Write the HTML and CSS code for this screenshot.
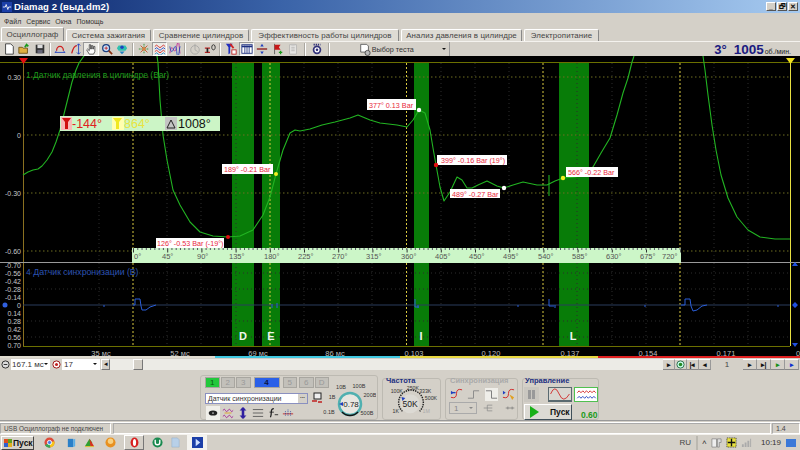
FILE: index.html
```html
<!DOCTYPE html>
<html lang="ru">
<head>
<meta charset="utf-8">
<title>Diamag 2</title>
<link rel="stylesheet" href="styles.css">
</head>
<body>
<div class="app">
  <header class="titlebar">
    <svg class="appicon" viewBox="0 0 12 12"><rect width="12" height="12" fill="#1c3fa8"/><path d="M1 6h3l1-3 2 6 1-3h3" stroke="#fff" fill="none"/></svg>
    <span class="title">Diamag 2 (выд.dm2)</span>
    <span class="winbtns">
      <span class="winbtn">_</span><span class="winbtn">🗗</span><span class="winbtn">✕</span>
    </span>
  </header>
  <nav class="menu"><span>Файл</span><span>Сервис</span><span>Окна</span><span>Помощь</span></nav>
  <div class="tabs">
    <span class="tab active t1">Осциллограф</span>
    <span class="tab t2">Система зажигания</span>
    <span class="tab t3">Сравнение цилиндров</span>
    <span class="tab t4">Эффективность работы цилиндров</span>
    <span class="tab t5">Анализ давления в цилиндре</span>
    <span class="tab t6">Электропитание</span>
  </div>
  <div class="toolbar">
    <span class="tb"><svg viewBox="0 0 14 14"><path d="M3 1h6l3 3v9H3z" fill="#fff" stroke="#333"/></svg></span>
    <span class="tb"><svg viewBox="0 0 14 14"><path d="M1 12V5h4l1 1h5v6z" fill="#e0b040" stroke="#6a5010"/><path d="M8 5l2-3 2 2" stroke="#1a9a1a" stroke-width="2" fill="none"/></svg></span>
    <span class="tb"><svg viewBox="0 0 14 14"><rect x="2" y="2" width="10" height="10" fill="#333"/><rect x="4" y="2" width="6" height="4" fill="#ddd"/><rect x="4" y="8" width="6" height="4" fill="#667"/></svg></span>
    <span class="sep s1"></span>
    <span class="tb"><svg viewBox="0 0 14 14"><path d="M3 9a4 5 0 0 1 8 0" stroke="#d02020" stroke-width="1.500" fill="none"/><path d="M1 11h12M1 11l2-1.500M13 11l-2-1.500" stroke="#2040c0" fill="none"/></svg></span>
    <span class="tb"><svg viewBox="0 0 14 14"><path d="M2 12C4 4 6 3 8 3" stroke="#d02020" fill="none" stroke-width="1.500"/><path d="M10 1v12M8 3l2-2 2 2M8 11l2 2 2-2" stroke="#2040c0" fill="none"/></svg></span>
    <span class="tb on"><svg viewBox="0 0 14 14"><path d="M5 13L2 8l1-1 2 2V2h1.500v5h1V3H9v4h1V4h1.500v6L10 13z" fill="#fff" stroke="#222" stroke-width=".8"/></svg></span>
    <span class="tb"><svg viewBox="0 0 14 14"><circle cx="6" cy="6" r="4" fill="#cfe6ff" stroke="#1c3f80" stroke-width="1.500"/><path d="M9 9l4 4" stroke="#8a3010" stroke-width="2"/><path d="M4 6h4M6 4v4" stroke="#c02020"/></svg></span>
    <span class="tb"><svg viewBox="0 0 14 14"><path d="M3 3h8l2 3-2 3H3L1 6z" fill="#30c0b0"/><path d="M4 10h6l-3 3z" fill="#2080c0"/><circle cx="7" cy="5" r="2" fill="#2040c0"/></svg></span>
    <span class="sep s2"></span>
    <span class="tb"><svg viewBox="0 0 14 14"><path d="M7 1v12M1 7h12" stroke="#2a8a2a" stroke-dasharray="2 1"/><path d="M3 3l8 8M11 3l-8 8" stroke="#c05020"/><circle cx="7" cy="7" r="2" fill="#e08040"/></svg></span>
    <span class="tb on"><svg viewBox="0 0 14 14"><path d="M1 4q2-3 4 0t4 0 4 0" stroke="#d02020" fill="none"/><path d="M1 7q2-3 4 0t4 0 4 0" stroke="#2040c0" fill="none"/><path d="M1 10q2-3 4 0t4 0 4 0" stroke="#d02020" fill="none"/><path d="M1 13q2-3 4 0t4 0 4 0" stroke="#2080c0" fill="none"/></svg></span>
    <span class="tb"><svg viewBox="0 0 14 14"><path d="M1 12C4-6 6 20 9 4s3 8 4 8" stroke="#c02090" fill="none"/><path d="M1 4c3 18 6-12 8 6s3-6 4-6" stroke="#2040c0" fill="none"/></svg></span>
    <span class="sep s3"></span>
    <span class="tb dim"><svg viewBox="0 0 14 14"><circle cx="7" cy="8" r="5" fill="none" stroke="#999"/><path d="M7 1v7l3 2" stroke="#999" fill="none"/></svg></span>
    <span class="tb"><svg viewBox="0 0 14 14"><path d="M1 6h6M1 11h6" stroke="#c02020" stroke-width="1.500"/><path d="M4 6v5" stroke="#222" stroke-width="2"/><path d="M11 2a2 3 0 1 0 .1 0" stroke="#222" fill="none"/></svg></span>
    <span class="sep s4"></span>
    <span class="tb"><svg viewBox="0 0 14 14"><path d="M1 1h8L6 5v7L4 13V5z" fill="#2030c0"/><path d="M6 1l4 5" stroke="#d02020" stroke-width="2"/><rect x="8" y="8" width="5" height="5" fill="#fff" stroke="#c02020"/></svg></span>
    <span class="tb on"><svg viewBox="0 0 14 14"><rect x="1" y="2" width="12" height="10" fill="#fff" stroke="#1c2f80"/><path d="M1 4h12" stroke="#1c2f80" stroke-width="2"/><path d="M4.500 3v9M7 3v9M9.500 3v9" stroke="#1c2f80"/></svg></span>
    <span class="tb"><svg viewBox="0 0 14 14"><path d="M1 7h12" stroke="#8a1010" stroke-width="1.500"/><path d="M7 1l2 3H5zM7 13l2-3H5z" fill="#2040c0"/></svg></span>
    <span class="tb"><svg viewBox="0 0 14 14"><path d="M3 1v12" stroke="#555"/><path d="M3 2h7l-2 3 2 3H3z" fill="#c81818"/><path d="M10 9v4M8 11h4" stroke="#1a9a1a" stroke-width="1.500"/></svg></span>
    <span class="tb dim"><svg viewBox="0 0 14 14"><path d="M3 2h8v11H3z" fill="#eee" stroke="#aaa"/><path d="M5 5h4M5 7h4M5 9h4" stroke="#aaa"/><rect x="5" y="1" width="4" height="2" fill="#bbb"/></svg></span>
    <span class="sep s5"></span>
    <span class="tb"><svg viewBox="0 0 14 14"><circle cx="7" cy="8" r="4" fill="#fff" stroke="#33337a" stroke-width="2"/><circle cx="7" cy="8" r="1.500" fill="#33337a"/><path d="M3 2h8" stroke="#33337a" stroke-width="2" stroke-dasharray="1.500 1"/></svg></span>
    <span class="sep s6"></span>
    <span class="testsel">
      <svg viewBox="0 0 14 14"><path d="M2 1h7l2 2v7H2z" fill="#fff" stroke="#555"/><circle cx="10" cy="11" r="3" fill="#bbb" stroke="#444"/></svg>
      <span class="testtxt">Выбор теста</span>
      <span class="arrow"></span>
    </span>
    <span class="rpm"><b class="deg">3°</b><b class="val">1005</b><span class="unit">об./мин.</span></span>
  </div>

  <svg class="plot" viewBox="0 56 800 302">
    <rect x="0" y="56" width="800" height="302" fill="#000"/>
    <g fill="#087c08">
      <rect x="232" y="63" width="22" height="283"/>
      <rect x="262" y="63" width="18" height="283"/>
      <rect x="414" y="63" width="15" height="283"/>
      <rect x="559" y="63" width="30" height="283"/>
    </g>
    <g class="griddim">
      <path d="M99 63V346M167 63V346M201 63V346M236 63V346M304 63V346M338 63V346M372 63V346M441 63V346M475 63V346M509 63V346M577 63V346M612 63V346M646 63V346M714 63V346M748 63V346"/>
      <path d="M23 273H790M23 289H790M23 321H790M23 337H790"/>
    </g>
    <g class="gridh">
      <path d="M23 77H790M23 135H790M23 193H790M23 251H790"/>
    </g>
    <g class="gridv">
      <path d="M133 63V346M270 63V346M406.500 63V346M543 63V346M680 63V346"/>
    </g>
    <path class="olive" d="M0 62.500H800M23 346.500H790"/>
    <path class="axisl" d="M23.500 58V346"/>
    <path class="axisr" d="M790.500 60V346"/>
    <path class="gray" d="M0 262.500H132M680 262.500H800"/>
    <path fill="#e01010" d="M19 58h9l-4.500 6z"/>
    <path fill="#f0e020" d="M786 58h9l-4.500 6z"/>

    <polyline class="trace" points="23,175 28,172 33,170 38,169 42,166 47,160 52,152 56,142 60,130 64,114 68,98 72,82 76,70 79,63 84,56"/>
    <polyline class="trace" points="157,56 158,63 160,100 163,135 167,160 173,190 180,205 190,222 200,232 213,236 228,237 240,236 253,230 263,215 270,197 276,174 283,150 290,133 295,130 300,131 310,129 322,125 335,122 350,118 358,115 370,120 380,123 397,125 407,127 413,120 419,110 425,113 430,130 433,148 436,165 440,187 444,201 450,192 457,177 462,180 467,188 472,188 478,185 487,181 497,186 504,188 513,185 523,182 537,185 547,185 555,181 563,178 575,177 583,175 593,167 601,153 610,138 617,115 623,93 628,78 632,62 634,56"/>
    <polyline class="trace" points="703,56 705,70 708,95 712,125 716,150 721,175 728,198 737,217 748,230 760,237 775,239 790,239"/>
    <path class="trace" d="M549 175V196"/>

    <path class="base" d="M23 305H790"/>
    <polyline class="sig" points="133,305 135,305 135,299 140,299 141,306 142,310 146,310 150,307 156,305"/>
    <polyline class="sig" points="681,305 685,305 685,299 690,299 691,306 693,311 697,310 702,306 707,305"/>
    <path class="sig" d="M104 305v2M415 299v8h4M418 305v3M518 305v2M549 299v7h5M555 305v3M645 305v2M778 305v2M272 304v4M277 303v5"/>

    <rect class="ruler" x="132" y="248" width="549" height="15"/>
    <path class="rtick" d="M133 249H681"/>
    <path class="rtickb" d="M133 251H681"/>
    <g class="rtext">
      <text x="134" y="259">0°</text><text x="162" y="259">45°</text><text x="197" y="259">90°</text><text x="229" y="259">135°</text><text x="264" y="259">180°</text><text x="298" y="259">225°</text><text x="332" y="259">270°</text><text x="366" y="259">315°</text><text x="401" y="259">360°</text><text x="435" y="259">405°</text><text x="469" y="259">450°</text><text x="503" y="259">495°</text><text x="538" y="259">540°</text><text x="572" y="259">585°</text><text x="606" y="259">630°</text><text x="640" y="259">675°</text><text x="662" y="259">720°</text>
    </g>

    <g class="yscale">
      <text x="21" y="80">0.30</text><text x="21" y="138">0</text><text x="21" y="196">-0.30</text><text x="21" y="254">-0.60</text>
      <text x="21" y="268">-0.70</text><text x="21" y="276">-0.56</text><text x="21" y="284">-0.42</text><text x="21" y="292">-0.28</text><text x="21" y="300">-0.14</text><text x="21" y="308">0</text><text x="21" y="316">0.14</text><text x="21" y="324">0.28</text><text x="21" y="332">0.42</text><text x="21" y="339.500">0.56</text><text x="21" y="347.500">0.70</text>
    </g>
    <g class="xscale">
      <text x="101" y="356">35 мс</text><text x="180" y="356">52 мс</text><text x="258" y="356">69 мс</text><text x="335" y="356">86 мс</text><text x="414" y="356">0.103</text><text x="491" y="356">0.120</text><text x="570" y="356">0.137</text><text x="648" y="356">0.154</text><text x="726" y="356">0.171</text><text x="798" y="356">0</text>
    </g>
    <text class="ch1" x="26" y="78">1 Датчик давления в цилиндре (Bar)</text>
    <text class="ch4" x="26" y="275">4 Датчик синхронизации (В)</text>
    <g class="marks">
      <text x="243" y="340">D</text><text x="271" y="340">E</text><text x="421" y="340">I</text><text x="573" y="340">L</text>
    </g>

    <g class="lblbox">
      <rect x="156" y="238" width="68" height="10"/>
      <rect x="222" y="164" width="51" height="10"/>
      <rect x="367" y="99" width="49" height="11"/>
      <rect x="437" y="155" width="70" height="10"/>
      <rect x="450" y="189" width="50" height="9"/>
      <rect x="566" y="167" width="52" height="10"/>
    </g>
    <g class="lbl">
      <text x="157" y="246">126° -0.53 Bar (-19°)</text>
      <text x="224" y="172">189° -0.21 Bar</text>
      <text x="369" y="108">377° 0.13 Bar</text>
      <text x="441" y="163">399° -0.16 Bar (19°)</text>
      <text x="452" y="197">489° -0.27 Bar</text>
      <text x="568" y="175">566° -0.22 Bar</text>
    </g>
    <circle cx="228" cy="237" r="2" fill="#e01010"/>
    <circle cx="276" cy="174" r="2" fill="#f0f020"/>
    <circle cx="419" cy="110" r="2.200" fill="#fff"/>
    <circle cx="436" cy="165" r="2.200" fill="#e01010"/>
    <circle cx="504" cy="188" r="2.200" fill="#fff"/>
    <circle cx="563" cy="178" r="2.200" fill="#f0f020"/>

    <rect x="60" y="116" width="160" height="15" fill="#ccf5c6"/>
    <rect x="61" y="117" width="11" height="13" fill="#f8b8b8"/>
    <rect x="112" y="117" width="12" height="13" fill="#ffffb0"/>
    <rect x="165" y="117" width="12" height="13" fill="#c4c4c4"/>
    <path fill="#d01010" d="M62 118h9l-3 4v7h-3v-7z"/>
    <path fill="#f0e820" d="M113 118h9l-3 4v7h-3v-7z"/>
    <path d="M171 120l4 8h-8z" fill="none" stroke="#222"/>
    <text class="cur red" x="72" y="128">-144°</text>
    <text class="cur yel" x="124" y="128">864°</text>
    <text class="cur blk" x="178" y="128">1008°</text>

    <circle cx="5" cy="305" r="2.500" fill="#3060e0"/>
    <path fill="#2050e0" d="M795 262l3 4h-6zM795 347l3-4h-6zM795 302l3 3-3 3-3-3z"/>
    <rect x="0" y="356" width="215" height="2" fill="#e0dcd0"/>
    <rect x="215" y="356" width="185" height="2" fill="#40c8e0"/>
    <rect x="400" y="356" width="198" height="2" fill="#e8d840"/>
    <rect x="598" y="356" width="202" height="2" fill="#e02020"/>
  </svg>

  <div class="scrollrow">
    <span class="rb"><svg viewBox="0 0 10 10"><circle cx="5" cy="5" r="4" fill="#ddd" stroke="#222"/><path d="M3 5h4" stroke="#222"/></svg></span>
    <span class="combo c1"><span class="ctext">167.1 мс</span><span class="arrow"></span></span>
    <span class="rb"><svg viewBox="0 0 10 10"><circle cx="5" cy="5" r="4" fill="#fff" stroke="#900"/><circle cx="5" cy="5" r="1.700" fill="#c02020"/></svg></span>
    <span class="combo c2"><span class="ctext">17</span><span class="arrow"></span></span>
    <span class="scrollbar">
      <span class="sbtn">◂</span>
      <span class="thumb"></span>
    </span>
    <span class="ctrl">
      <span class="pb">▸</span><span class="pb rec"><svg viewBox="0 0 10 10"><circle cx="5" cy="5" r="4" fill="#cfe" stroke="#264"/><circle cx="5" cy="5" r="2" fill="#282"/></svg></span><span class="pb">|◂</span><span class="pb">◂</span>
      <span class="pageno">1</span>
      <span class="pb wide">▸</span><span class="pb wide">▸|</span><span class="pb wide grn">▸</span><span class="pb wide blu">▸</span>
    </span>
  </div>

  <section class="panel">
    <div class="group g1">
      <div class="g1left">
        <div class="chans">
          <span class="ch c-on">1</span><span class="ch">2</span><span class="ch">3</span><span class="ch c-blue">4</span><span class="ch c5">5</span><span class="ch">6</span><span class="ch">D</span>
        </div>
        <div class="sensor">
          <span class="sensbox"><span class="senstxt">Датчик синхронизации</span><span class="dots">...</span></span>
          <svg class="swapico" viewBox="0 0 12 12"><rect x="3" y="1" width="7" height="6" fill="#eee" stroke="#222"/><path d="M1 9h5M7 10h4" stroke="#c02020" stroke-width="1.500"/></svg>
        </div>
        <div class="icons6">
          <span class="i6 on"><svg viewBox="0 0 14 14"><ellipse cx="7" cy="7" rx="5" ry="3" fill="#222"/><circle cx="7" cy="7" r="1" fill="#ccc"/></svg></span>
          <span class="i6"><svg viewBox="0 0 14 14"><path d="M1 4q2-3 3 0t3 0 3 0 3 0" stroke="#a02090" fill="none"/><path d="M1 11q2-3 3 0t3 0 3 0 3 0" stroke="#a02090" fill="none"/><path d="M3 7h8" stroke="#e0a020"/></svg></span>
          <span class="i6"><svg viewBox="0 0 14 14"><path d="M7 1v12" stroke="#3020a0" stroke-width="3"/><path d="M7 0l4 4H3zM7 14l4-4H3z" fill="#3020a0"/></svg></span>
          <span class="i6"><svg viewBox="0 0 14 14"><path d="M1 3h12M1 7h12M1 11h12" stroke="#555"/></svg></span>
          <span class="i6"><svg viewBox="0 0 14 14"><path d="M8 2Q5 2 5 6t-1 6" stroke="#222" stroke-width="1.500" fill="none"/><path d="M3 6h5M9 9h4" stroke="#222"/></svg></span>
          <span class="i6"><svg viewBox="0 0 14 14"><path d="M1 8h12" stroke="#c02020"/><path d="M4 5v6M7 3v8M10 5v6" stroke="#2040a0" stroke-dasharray="1 1"/></svg></span>
        </div>
      </div>
      <svg class="knob k1" viewBox="0 0 56 38">
        <g class="klbl">
          <text x="21" y="8">10В</text><text x="39" y="7">100В</text><text x="50" y="16">200В</text><text x="12" y="18">1В</text><text x="9" y="33">0.1В</text><text x="47" y="34">500В</text>
        </g>
        <circle cx="30" cy="23" r="11" fill="#e8e6e0" stroke="#50b0b0" stroke-width="2.500"/>
        <path d="M38 31a11 11 0 0 1-16 0" stroke="#111" stroke-width="1.500" fill="none"/>
        <path d="M19 23l4-2v4z" fill="#2040c0"/>
        <text class="kval" x="31" y="26">0.78</text>
      </svg>
    </div>
    <div class="group g2">
      <div class="gtitle">Частота</div>
      <svg class="knob k2" viewBox="0 0 58 40">
        <g class="klbl">
          <text x="14" y="14">100K</text><text x="31" y="10.500">250K</text><text x="44" y="14">333K</text><text x="50" y="21">500K</text><text x="13" y="35">1K</text><text class="off" x="45" y="35">1M</text>
        </g>
        <path d="M20 33a13 13 0 1 1 18 0" stroke="#222" stroke-width="1.500" fill="#d4d0c8" stroke-dasharray="1.500 1"/>
        <circle cx="28" cy="25" r="10" fill="#dcdad4"/>
        <path d="M19 18l4 1-3 3z" fill="#2040c0"/>
        <text class="kval big" x="28" y="28">50K</text>
      </svg>
    </div>
    <div class="group g3">
      <div class="gtitle off">Синхронизация</div>
      <div class="syncrow">
        <svg viewBox="0 0 14 14"><path d="M1 10Q7 12 7 6t6-4" stroke="#d02020" fill="none"/><path d="M1 5h5" stroke="#2040c0" stroke-width="1.500"/><path d="M1 3l3 2-3 2z" fill="#2040c0"/></svg>
        <svg viewBox="0 0 14 14"><path d="M1 11h6V3h6" stroke="#888" fill="none"/></svg>
        <svg class="pressed" viewBox="0 0 14 14"><path d="M1 3h6v8h6" stroke="#777" fill="none"/></svg>
        <svg viewBox="0 0 14 14"><path d="M1 10Q7 12 7 6t6-4" stroke="#d02020" fill="none"/><path d="M1 3l3 2-3 2z" fill="#2040c0"/><path d="M8 7l5 3-2 3z" fill="#e0a020"/></svg>
      </div>
      <div class="syncrow2">
        <span class="combo c3"><span class="ctext off">1</span><span class="arrow off"></span></span>
        <svg viewBox="0 0 14 14"><path d="M1 7h5M6 3v8M6 3h7M6 11h7M6 7h7" stroke="#888"/></svg>
        <svg viewBox="0 0 14 14"><path d="M1 7h12M4 5v4M10 5v4" stroke="#777"/></svg>
      </div>
    </div>
    <div class="group g4">
      <div class="gtitle">Управление</div>
      <div class="ctlrow">
        <span class="cbtn pause"><span class="pbar"></span><span class="pbar"></span></span>
        <span class="cbtn sine"><svg viewBox="0 0 24 14"><path d="M1 7q5-12 10 0t12 0" stroke="#d02020" fill="none"/></svg></span>
        <span class="cbtn wave"><svg viewBox="0 0 22 13"><path d="M1 4l2-2 2 2 2-2 2 2 2-2 2 2 2-2 2 2 2-2 2 2" stroke="#d02020" fill="none"/><path d="M1 10l2-2 2 2 2-2 2 2 2-2 2 2 2-2 2 2 2-2 2 2" stroke="#2040c0" fill="none"/></svg></span>
      </div>
      <div class="ctlrow2">
        <span class="start"><svg viewBox="0 0 9 12"><path d="M0 0l9 6-9 6z" fill="#18b018"/></svg><b>Пуск</b></span>
        <b class="rate">0.60</b>
      </div>
    </div>
  </section>

  <footer class="status">
    <span class="st1">USB Осциллограф не подключен</span>
    <span class="st2"></span>
    <span class="st3">1.4</span>
  </footer>

  <div class="taskbar">
    <span class="startbtn"><svg viewBox="0 0 10 10"><rect width="5" height="5" fill="#e05020"/><rect x="5" width="5" height="5" fill="#60a020"/><rect y="5" width="5" height="5" fill="#3060d0"/><rect x="5" y="5" width="5" height="5" fill="#e0b020"/></svg>Пуск</span>
    <span class="tk k-a"><svg viewBox="0 0 12 12"><circle cx="6" cy="6" r="5.500" fill="#dd4b39"/><path d="M6 6L1 9a5.500 5.500 0 0 0 6 2.500z" fill="#3aa757"/><path d="M6 6l5.200-1.500A5.500 5.500 0 0 1 7 11.500z" fill="#f5c518"/><circle cx="6" cy="6" r="2.300" fill="#4a80e8" stroke="#fff"/></svg></span>
    <span class="tk k-b"><svg viewBox="0 0 12 12"><path d="M2 2h6v9H2z" fill="#2a80c8"/><path d="M8 3l2-1v8l-2 1z" fill="#5ab0e8"/></svg></span>
    <span class="tk k-c"><svg viewBox="0 0 12 12"><path d="M1 10L6 2l3 4-2 4z" fill="#30a030"/><path d="M6 2l5 8H7z" fill="#d83020"/><path d="M1 10h10v1H1z" fill="#e0c030"/></svg></span>
    <span class="tk k-d"><svg viewBox="0 0 12 12"><circle cx="6" cy="6" r="5.500" fill="#e89020"/><circle cx="6" cy="4.500" r="3" fill="#f8d080"/></svg></span>
    <span class="tk k-e"><svg viewBox="0 0 12 14"><ellipse cx="6" cy="7" rx="5" ry="6.500" fill="#d82020"/><ellipse cx="6" cy="7" rx="2" ry="4.500" fill="#fff"/></svg></span>
    <span class="tk k-f"><svg viewBox="0 0 12 12"><circle cx="6" cy="6" r="5.500" fill="#1a8a50"/><path d="M3.500 3v3a2.500 2.500 0 0 0 5 0V3" stroke="#fff" stroke-width="1.500" fill="none"/></svg></span>
    <span class="tk k-g"><svg viewBox="0 0 12 12"><path d="M2 1h6l2 2v8H2z" fill="#b8d0e8" stroke="#8aa8c8" stroke-width=".5"/></svg></span>
    <span class="tk k-h"><svg viewBox="0 0 12 12"><rect width="12" height="12" fill="#1c3fa8"/><path d="M4 2l5 4-5 4z" fill="#cfe0ff"/></svg></span>
    <span class="lang">RU</span>
    <span class="tray">
      <span class="up">˄</span>
      <svg viewBox="0 0 12 12"><path d="M1 2h5v9H1z" fill="#eee" stroke="#777" stroke-width=".7"/><path d="M7 2h4v4H9v5H7z" fill="#ddd" stroke="#777" stroke-width=".7"/></svg>
      <svg viewBox="0 0 12 12"><rect x="1" y="1" width="10" height="10" fill="#e8e040" stroke="#333" stroke-dasharray="1 1"/><path d="M6 2v8M2 6h8" stroke="#111" stroke-width="1.500"/></svg>
      <svg viewBox="0 0 12 12"><path d="M1 11h2V8H1zM4 11h2V6H4zM7 11h2V4H7zM10 11h1V2h-1z" fill="#aaa"/></svg>
      <span class="clock">10:19</span>
      <span class="desk"></span>
    </span>
  </div>
</div>
</body>
</html>
```
FILE: styles.css
```css
* { box-sizing: border-box; }
html, body { margin: 0; padding: 0; }
body { width: 800px; height: 450px; overflow: hidden; background: #d4d0c8; font-family: "Liberation Sans", Arial, sans-serif; color: #333; }
.app { width: 800px; height: 450px; display: flex; flex-direction: column; }

.titlebar { height: 13px; flex: none; display: flex; align-items: center; padding-left: 2px; gap: 2px; background: linear-gradient(90deg, #0a246a 0%, #3a63a8 35%, #a6caf0 100%); }
.appicon { width: 10px; height: 10px; }
.title { color: #fff; font-size: 9.500px; font-weight: bold; letter-spacing: .1px; }
.winbtns { margin-left: auto; display: flex; gap: 1px; padding-right: 2px; }
.winbtn { width: 10px; height: 9px; background: #d4d0c8; border: 1px solid; border-color: #fff #555 #555 #fff; font-size: 7px; line-height: 7px; text-align: center; color: #111; font-weight: bold; overflow: hidden; }

.menu { height: 14px; flex: none; display: flex; align-items: center; gap: 5px; padding: 2px 0 0 4px; font-size: 7px; color: #333; }

.tabs { height: 14px; flex: none; display: flex; align-items: flex-end; gap: 2px; padding-left: 1px; }
.tab { height: 12px; background: #dedbd4; border: 1px solid #fff; border-right-color: #888; border-bottom: 0; border-radius: 2px 2px 0 0; font-size: 7.900px; line-height: 11px; text-align: center; color: #444; white-space: nowrap; letter-spacing: .1px; }
.tab.active { height: 14px; background: #d4d0c8; line-height: 13px; margin-right: 0; }
.t1 { width: 63px; } .t2 { width: 85px; } .t3 { width: 96px; } .t4 { width: 148px; } .t5 { width: 121px; } .t6 { width: 75px; }

.toolbar { height: 15px; flex: none; display: flex; align-items: center; padding-left: 1px; border-top: 1px solid #f4f2ee; position: relative; }
.tb { width: 15.600px; height: 14px; display: flex; align-items: center; justify-content: center; flex: none; }
.tb svg { width: 12px; height: 12px; }
.tb.on { background: #ecebe6; border: 1px solid; border-color: #999 #fff #fff #999; }
.tb.dim { opacity: .75; }
.sep { flex: none; height: 13px; border-left: 1px solid #aaa7a0; border-right: 1px solid #fff; }
.s1 { width: 2px; margin: 0 1.500px 0 1px; }
.s2 { width: 2px; margin: 0 2px 0 2px; }
.s3 { width: 2px; margin: 0 1px 0 1px; }
.s4 { width: 2px; margin: 0 2px 0 1px; }
.s5 { width: 2px; margin: 0 3px 0 3px; }
.s6 { width: 2px; margin: 0 0 0 3px; }
.testsel { display: flex; align-items: center; margin-left: 29px; width: 91px; height: 14px; border-right: 1px solid #999; flex: none; }
.testsel svg { width: 12px; height: 13px; flex: none; }
.testtxt { font-size: 7.200px; margin-left: 1px; color: #333; flex: none; }
.arrow { width: 0; height: 0; border: 2px solid transparent; border-top: 2.500px solid #111; border-bottom: 0; flex: none; margin-left: auto; margin-right: 3px; }
.arrow.off { border-top-color: #888; }
.rpm { margin-left: auto; padding-right: 9px; display: flex; align-items: baseline; color: #1a1a80; }
.deg { font-size: 13px; margin-right: 7px; }
.val { font-size: 13.500px; }
.unit { font-size: 7px; margin-left: 1px; color: #222; }

.plot { display: block; width: 800px; height: 302px; flex: none; }
.griddim path { stroke: #2c2c2c; stroke-dasharray: 1 3; fill: none; }
.gridh path { stroke: #6e6e20; stroke-dasharray: 1.500 2.500; fill: none; }
.gridv path { stroke: #d8c840; stroke-dasharray: 2 2; fill: none; }
.olive { stroke: #6c7000; fill: none; }
.axisl { stroke: #8a7020; fill: none; }
.axisr { stroke: #e8e040; fill: none; }
.gray { stroke: #9a9a9a; fill: none; }
.trace { stroke: #22b422; fill: none; stroke-width: 1.100; stroke-linejoin: round; }
.base { stroke: #2a3c5c; fill: none; }
.sig { stroke: #2a5ed8; fill: none; stroke-width: 1; }
.ruler { fill: #ccf6c8; }
.rtick { stroke: #556; stroke-width: 2; stroke-dasharray: 1 3.270; fill: none; }
.rtickb { stroke: #333; stroke-width: 3; stroke-dasharray: 1 33.200; fill: none; }
.rtext text { font-size: 7.500px; fill: #555; }
.yscale text { font-size: 7px; fill: #c8c8c8; text-anchor: end; }
.xscale text { font-size: 7.500px; fill: #bdbdbd; text-anchor: middle; }
.ch1 { font-size: 8.500px; fill: #1c9a1c; }
.ch4 { font-size: 8.700px; fill: #2a50b0; }
.marks text { font-size: 11px; font-weight: bold; fill: #eef6ee; text-anchor: middle; }
.lblbox rect { fill: #fff; }
.lbl text { font-size: 7.200px; fill: #e8283c; }
.cur { font-size: 12.500px; }
.cur.red { fill: #e02020; }
.cur.yel { fill: #e8e440; }
.cur.blk { fill: #111; }

.scrollrow { height: 12px; flex: none; display: flex; align-items: center; background: #d4d0c8; font-size: 8px; padding-left: 1px; }
.rb { width: 10px; height: 11px; flex: none; display: flex; align-items: center; }
.rb svg { width: 9px; height: 9px; }
.combo { background: #fff; height: 11px; display: flex; align-items: center; flex: none; font-size: 8px; color: #333; padding-left: 1px; }
.c1 { width: 39px; margin-right: 2px; }
.c2 { width: 38px; padding-left: 2px; }
.ctext { white-space: nowrap; }
.scrollbar { width: 562px; height: 11px; margin-left: 1px; background: #ecebe6; display: flex; align-items: center; flex: none; }
.sbtn { width: 9px; height: 11px; background: #d4d0c8; border: 1px solid; border-color: #fff #777 #777 #fff; font-size: 7px; line-height: 8px; text-align: center; color: #111; overflow: hidden; flex: none; }
.thumb { width: 10px; height: 11px; margin-left: 23px; background: #d4d0c8; border: 1px solid; border-color: #fff #777 #777 #fff; flex: none; }
.ctrl { display: flex; align-items: center; flex: none; }
.pb { width: 12px; height: 11px; background: #d4d0c8; border-bottom: 1px solid #888; border-right: 1px solid #999; border-top: 1px solid #fff; font-size: 7px; line-height: 9px; text-align: center; color: #111; flex: none; overflow: hidden; font-weight: bold; white-space: nowrap; }
.pb.wide { width: 14px; }
.pb.rec svg { width: 9px; height: 9px; display: block; margin: 0 auto; }
.pb.grn { color: #169016; }
.pb.blu { color: #1030d0; }
.pageno { width: 32px; text-align: center; font-size: 8px; color: #444; flex: none; }

.panel { height: 51px; flex: none; display: flex; padding: 5px 0 0 200px; gap: 4px; border-bottom: 1px solid #999; }
.group { border: 1px solid #bdbab2; border-radius: 3px; position: relative; height: 45px; flex: none; align-self: flex-end; }
.g1 { width: 178px; display: flex; padding: 0 0 0 4px; }
.g2 { width: 59px; height: 42px; padding-left: 2px; }
.g3 { width: 73px; height: 42px; padding-left: 3px; margin-left: 0; }
.g4 { width: 77px; height: 42px; padding-left: 1px; }
.g1left { width: 118px; flex: none; display: flex; flex-direction: column; }
.chans { display: flex; gap: 1px; margin-top: 1px; }
.ch { width: 14.500px; height: 11px; background: #c2c0ba; border: 1px solid #a8a6a0; font-size: 8px; line-height: 9px; text-align: center; color: #999; flex: none; }
.c-on { background: #22c83c; color: #0a5a10; }
.c-blue { width: 26px; margin: 0 2px; background: #2a60e8; color: #0a1440; font-weight: bold; }
.c5 { margin-right: 1px; }
.sensor { display: flex; align-items: center; gap: 3px; margin-top: 4px; }
.sensbox { width: 103px; height: 11px; background: #fff; border: 1px solid #8a90c0; display: flex; align-items: center; padding-left: 2px; font-size: 7px; color: #333; flex: none; }
.senstxt { flex: 1; white-space: nowrap; }
.dots { width: 9px; height: 9px; background: #d4d0c8; font-size: 6px; line-height: 5px; text-align: center; font-weight: bold; }
.swapico { width: 12px; height: 12px; flex: none; }
.icons6 { display: flex; gap: 1px; margin-top: 2px; margin-left: 1px; }
.i6 { width: 14px; height: 14px; display: flex; align-items: center; justify-content: center; flex: none; }
.i6 svg { width: 12px; height: 12px; }
.i6.on { background: #f0efea; }
.knob { display: block; flex: none; }
.k1 { width: 56px; height: 38px; margin: 5px 0 0 -3px; }
.k2 { width: 56px; height: 38px; margin: -5px 0 0 -2px; }
.klbl text { font-size: 5.500px; fill: #333; text-anchor: middle; }
.klbl text.off { fill: #aaa; }
.kval { font-size: 8px; fill: #222; text-anchor: middle; }
.kval.big { font-size: 9px; }
.gtitle { font-size: 7.500px; font-weight: bold; color: #1c2f80; line-height: 9px; padding-left: 1px; white-space: nowrap; margin-top: -3px; }
.gtitle.off { color: #aaa; font-size: 7.500px; }
.syncrow { display: flex; justify-content: space-between; padding: 3px 2px 0 1px; }
.syncrow svg { width: 13px; height: 13px; }
.syncrow .pressed { background: #efeee9; }
.syncrow2 { display: flex; align-items: center; gap: 6px; margin-top: 1px; padding-right: 2px; }
.syncrow2 svg { width: 12px; height: 12px; }
.syncrow2 svg:last-child { margin-left: 6px; }
.c3 { width: 28px; height: 12px; background: #d4d0c8; border: 1px solid #aaa; padding-left: 4px; }
.ctext.off { color: #888; }
.ctlrow { display: flex; align-items: center; padding-top: 2px; }
.cbtn { height: 15px; display: flex; align-items: center; justify-content: center; flex: none; }
.pause { width: 15px; gap: 1px; background: #cac7c0; }
.pbar { width: 3px; height: 9px; background: #999; }
.sine { width: 24px; margin-left: 9px; background: #d8d6d0; border: 1px solid #5a6a70; border-bottom-width: 2px; }
.sine svg { width: 22px; height: 12px; }
.wave { width: 24px; margin-left: 2px; background: #fff; border: 1px solid #50c050; }
.wave svg { width: 21px; height: 12px; }
.ctlrow2 { display: flex; align-items: flex-end; margin-top: 2px; }
.start { width: 48px; height: 16px; background: #dcdad4; border: 1px solid; border-color: #fff #40505a #40505a #fff; display: flex; align-items: center; flex: none; padding-left: 5px; }
.start svg { width: 9px; height: 12px; flex: none; }
.start b { font-size: 8.500px; color: #111; margin-left: 11px; }
.rate { font-size: 8.500px; color: #1a9a1a; margin-left: 9px; line-height: 9px; }

.status { height: 12px; flex: none; display: flex; border-top: 1px solid #fff; font-size: 6.400px; color: #444; line-height: 10px; margin-top: 1px; }
.st1 { width: 111px; padding-left: 3px; border: 1px solid; border-color: #aaa #fff #fff #aaa; white-space: nowrap; }
.st2 { flex: 1; margin-left: 2px; border: 1px solid; border-color: #aaa #fff #fff #aaa; }
.st3 { width: 28px; padding-left: 3px; margin-left: 1px; border: 1px solid; border-color: #aaa #fff #fff #aaa; font-size: 7px; }

.taskbar { flex: 1; display: flex; align-items: center; padding-left: 1px; border-top: 1px solid #f4f2ee; }
.startbtn { width: 33px; height: 14px; background: #d4d0c8; border: 1px solid; border-color: #fff #444 #444 #fff; display: flex; align-items: center; gap: 1px; font-size: 8.500px; font-weight: bold; color: #111; padding-left: 2px; flex: none; }
.startbtn svg { width: 8px; height: 8px; }
.tk { display: flex; align-items: center; justify-content: center; width: 20px; height: 15px; flex: none; }
.tk svg { width: 11px; height: 11px; }
.k-a { margin-left: 5px; }
.k-b { margin-left: 2px; }
.k-c { margin-left: -2px; }
.k-d { margin-left: 1px; }
.k-e { margin-left: 4px; border: 1px solid; border-color: #fff #777 #777 #fff; }
.k-f { margin-left: 3px; }
.k-g { margin-left: -2px; }
.k-h { margin-left: 2px; background: #f4f3ef; }
.lang { margin-left: auto; font-size: 8px; color: #444; margin-right: 5px; }
.tray { width: 104px; height: 14px; display: flex; align-items: center; border-left: 2px solid #bbb8b0; padding-left: 4px; gap: 4px; flex: none; }
.tray svg { width: 11px; height: 11px; flex: none; }
.up { font-size: 8px; line-height: 8px; width: 5px; }
.clock { font-size: 8px; color: #333; margin-left: 5px; }
.desk { width: 10px; height: 8px; background: #3a78d8; margin-left: 1px; flex: none; }
```
